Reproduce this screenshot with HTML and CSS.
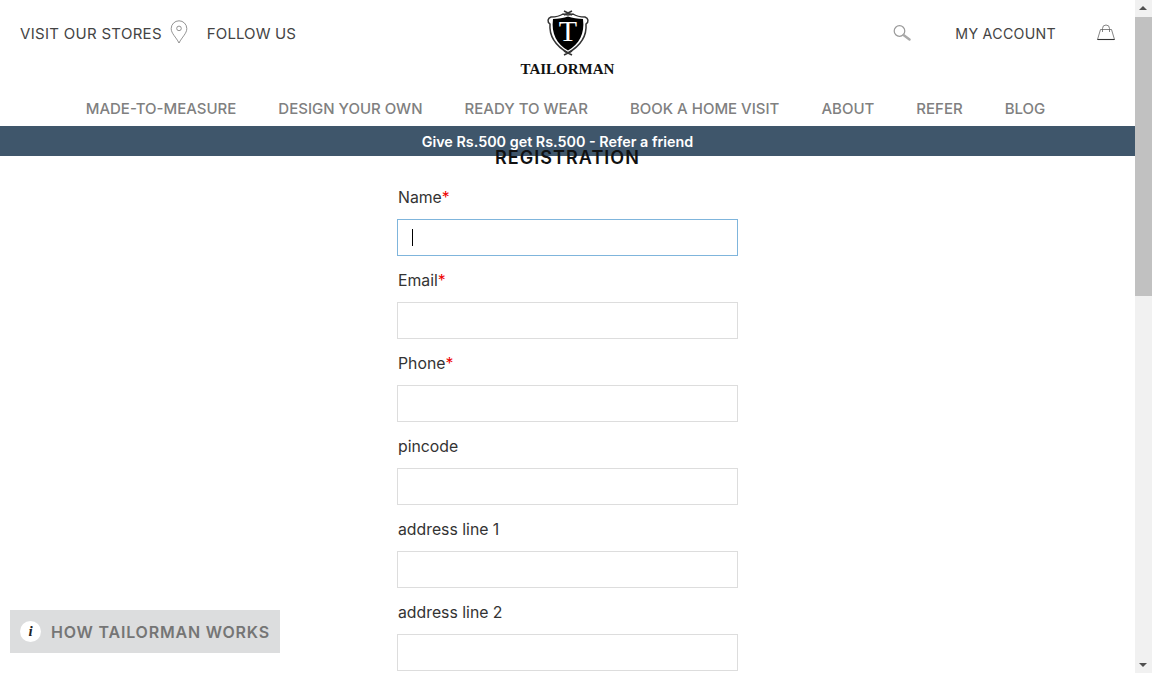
FILE: index.html
```html
<!DOCTYPE html>
<html lang="en">
<head>
<meta charset="utf-8">
<title>Tailorman - Registration</title>
<link rel="stylesheet" href="styles.css">
</head>
<body>
<div class="viewport">
  <div class="page">
    <header class="header">
      <div class="top">
        <div class="top-left">
          <a class="top-link">VISIT OUR STORES</a>
          <svg class="pin" width="18" height="24" viewBox="0 0 18 24" fill="none" stroke="#777" stroke-width="0.8"><path d="M9 23 C6 17 1.2 13.500 1.2 8.600 A7.800 7.800 0 0 1 16.800 8.600 C16.800 13.500 12 17 9 23 Z"/><circle cx="9" cy="8.400" r="2.300"/></svg>
          <a class="top-link follow">FOLLOW US</a>
        </div>
        <div class="logo">
          <svg class="crest" width="44" height="46" viewBox="0 0 44 46">
            <path d="M5 7 C10 7 14 6 17 4 L22 5 L27 4 C30 6 34 7 39 7 C42.500 8 43 12 40 14 C41 26 34 36 22 43 C10 36 3 26 4 14 C1 12 1.500 8 5 7 Z" fill="#fff" stroke="#333" stroke-width="1.500"/>
            <path d="M7 9 C12 9 18 8 22 6.500 C26 8 32 9 37 9 C39 24 33 34 22 40.500 C11 34 5 24 7 9 Z" fill="#000"/>
            <text x="22" y="31" text-anchor="middle" class="crest-t">T</text>
            <path d="M18 1 L26 5 M26 1 L18 5 M18 45 L26 41 M26 45 L18 41" stroke="#333" stroke-width="1.500" fill="none"/>
          </svg>
          <div class="wordmark">TAILORMAN</div>
        </div>
        <div class="top-right">
          <svg class="search" width="18" height="16" viewBox="0 0 18 16" fill="none"><circle cx="6.500" cy="6" r="5.300" stroke="#999" stroke-width="1.200"/><path d="M10.500 10 L16.500 14.500" stroke="#aaa" stroke-width="2.400" stroke-linecap="round"/></svg>
          <a class="top-link account">MY ACCOUNT</a>
          <svg class="bag" width="18" height="17" viewBox="0 0 18 17" fill="none" stroke="#666" stroke-width="0.800"><path d="M3.500 5.500 H14.500 L17.500 15.500 H0.500 Z"/><path d="M5.500 8 V4.500 A3.500 3.500 0 0 1 12.500 4.500 V8"/><path d="M0.500 15.500 H17.500" stroke="#333" stroke-width="1.100"/></svg>
        </div>
      </div>
      <nav class="nav">
        <a class="nav-link">MADE-TO-MEASURE</a>
        <a class="nav-link">DESIGN YOUR OWN</a>
        <a class="nav-link">READY TO WEAR</a>
        <a class="nav-link">BOOK A HOME VISIT</a>
        <a class="nav-link">ABOUT</a>
        <a class="nav-link">REFER</a>
        <a class="nav-link">BLOG</a>
      </nav>
      <div class="banner">Give Rs.500 get Rs.500 - Refer a friend</div>
    </header>
    <main class="main">
      <h1 class="title">REGISTRATION</h1>
      <form class="form">
        <div class="field"><label class="label">Name<span class="req">*</span></label><div class="input focus"><span class="caret"></span></div></div>
        <div class="field"><label class="label">Email<span class="req">*</span></label><div class="input"></div></div>
        <div class="field"><label class="label">Phone<span class="req">*</span></label><div class="input"></div></div>
        <div class="field"><label class="label">pincode</label><div class="input"></div></div>
        <div class="field"><label class="label">address line 1</label><div class="input"></div></div>
        <div class="field"><label class="label">address line 2</label><div class="input"></div></div>
      </form>
    </main>
    <div class="how">
      <span class="how-icon">i</span>
      <span class="how-text">HOW TAILORMAN WORKS</span>
    </div>
  </div>
  <div class="scrollbar">
    <div class="arrow up"></div>
    <div class="thumb"></div>
    <div class="track"></div>
    <div class="arrow down"></div>
  </div>
</div>
</body>
</html>
```
FILE: styles.css
```css
* { box-sizing: border-box; }
html, body { margin: 0; height: 673px; overflow: hidden; background: #fff; }
body { font-family: Inter, "Liberation Sans", sans-serif; color: #333; }
.viewport { display: flex; width: 1152px; height: 673px; }
.page { position: relative; width: 1135px; height: 673px; overflow: hidden; }

.header { display: flex; flex-direction: column; }
.top { display: flex; justify-content: space-between; height: 90px; padding: 0 20px; }
.top-left { display: flex; align-items: center; height: 66px; width: 300px; }
.top-link { font-size: 15px; color: #444; letter-spacing: 0.3px; white-space: nowrap; }
.pin { margin-left: 8px; margin-top: -2px; flex: none; }
.follow { margin-left: 19px; letter-spacing: 0.100px; }
.logo { display: flex; flex-direction: column; align-items: center; padding-top: 10px; width: 100px; }
.crest { display: block; }
.wordmark { font-family: "Liberation Serif", serif; font-weight: 700; font-size: 15px; color: #111; margin-top: 5px; white-space: nowrap; }
.crest-t { font-family: "Liberation Serif", serif; font-size: 30px; fill: #fff; }
.top-right { display: flex; align-items: center; height: 66px; width: 300px; justify-content: flex-end; }
.search { margin-right: 44px; margin-top: -1px; flex: none; }
.account { margin-right: 41px; font-size: 14.200px; letter-spacing: 0.300px; }
.bag { margin-top: -1px; flex: none; }

.nav { display: flex; justify-content: center; gap: 42px; height: 36px; padding: 9px 4px 0 0; }
.nav-link { font-size: 15px; font-weight: 500; color: #808080; white-space: nowrap; }

.banner { height: 30px; background: #3f566b; color: #fff; font-size: 14.350px; font-weight: 600; line-height: 32px; text-align: center; padding-right: 20px; }

.main { display: flex; flex-direction: column; align-items: center; margin-top: -8px; position: relative; }
.title { margin: 0; font-size: 18px; font-weight: 600; letter-spacing: 1.050px; line-height: 20px; color: #111; }
.form { width: 341px; margin-top: 18px; display: flex; flex-direction: column; gap: 13px; }
.field { display: flex; flex-direction: column; gap: 9px; }
.label { font-size: 15.800px; line-height: 24px; color: #333; padding-left: 1px; height: 24px; }
.req { color: #e00; }
.input { height: 37px; border: 1px solid #ddd; background: #fff; display: flex; align-items: center; padding-left: 14px; flex: none; }
.input.focus { border-color: #7fb5dc; }
.caret { width: 1px; height: 17px; background: #000; }

.how { position: absolute; left: 10px; top: 610px; width: 270px; height: 43px; background: #dcddde; display: flex; align-items: center; padding-left: 10px; }
.how-icon { width: 21px; height: 21px; border-radius: 50%; background: #fff; color: #222; font: italic 700 15px/21px "Liberation Serif", serif; text-align: center; }
.how-text { margin-left: 10px; font-size: 16px; font-weight: 600; letter-spacing: 0.800px; color: #757575; white-space: nowrap; }

.scrollbar { width: 17px; height: 673px; background: #f1f1f1; display: flex; flex-direction: column; align-items: center; }
.arrow { width: 17px; height: 17px; position: relative; flex: none; }
.arrow::after { content: ""; position: absolute; left: 4px; border-left: 4px solid transparent; border-right: 4px solid transparent; }
.arrow.up::after { top: 6px; border-bottom: 4px solid #505050; }
.arrow.down::after { top: 7px; border-top: 4px solid #505050; }
.thumb { width: 17px; height: 279px; background: #c1c1c1; flex: none; }
.track { flex: 1; }
```
